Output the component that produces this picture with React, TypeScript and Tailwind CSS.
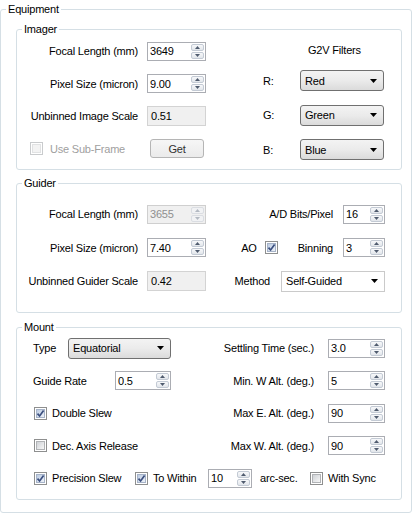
import type { ReactNode } from 'react'

function Arrow({ up, dim }: { up?: boolean; dim?: boolean }) {
  return (
    <svg width="5" height="3" viewBox="0 0 5 3">
      <path d={up ? 'M0 3L2.5 0L5 3Z' : 'M0 0H5L2.5 3Z'} fill={dim ? '#b3b9c2' : '#4f5b6e'} />
    </svg>
  )
}

function Spin({ value, className, disabled }: { value: string; className: string; disabled?: boolean }) {
  return (
    <div
      className={`flex h-[19px] items-stretch border ${
        disabled ? 'border-[#cfcfcf] bg-[#f0f0f0] text-[#8f8f8f]' : 'border-[#abadb3] bg-white'
      } ${className}`}
    >
      <span className="flex flex-1 items-center pl-[2px]">{value}</span>
      <div className="flex w-[15px] flex-col gap-px p-px">
        {[true, false].map((up) => (
          <div
            key={String(up)}
            className={`flex flex-1 items-center justify-center rounded-[2px] border ${
              disabled
                ? 'border-[#dadde2] bg-[#f1f2f4]'
                : 'border-[#c3cad4] bg-linear-to-b from-[#f7f8fa] to-[#e2e6eb]'
            }`}
          >
            <Arrow up={up} dim={disabled} />
          </div>
        ))}
      </div>
    </div>
  )
}

function ReadOnly({ value, className }: { value: string; className: string }) {
  return (
    <div className={`flex h-[20px] items-center border border-[#d3d3d3] bg-[#f0f0f0] pl-[3px] ${className}`}>
      {value}
    </div>
  )
}

function Combo({ value, className, flat }: { value: string; className: string; flat?: boolean }) {
  return (
    <div
      className={`flex h-[21px] items-center justify-between pl-[4px] pr-[6px] ${
        flat
          ? 'border border-[#cacaca] bg-white'
          : 'rounded-[3px] border border-[#707070] bg-linear-to-b from-[#f3f3f3] via-[#ebebeb] to-[#dbdbdb]'
      } ${className}`}
    >
      <span>{value}</span>
      <svg width="7" height="4" viewBox="0 0 7 4">
        <path d="M0 0H7L3.5 4Z" fill="#000" />
      </svg>
    </div>
  )
}

function Check({ checked, disabled }: { checked?: boolean; disabled?: boolean }) {
  return (
    <span
      className={`relative flex h-[13px] w-[13px] shrink-0 border bg-white p-px ${
        disabled ? 'border-[#c9cbcd]' : 'border-[#8e8f8f]'
      }`}
    >
      <span
        className={`h-full w-full border ${
          disabled
            ? 'border-[#e1e2e3] bg-[#f3f3f3]'
            : checked
              ? 'border-[#a6b3c8] bg-linear-to-br from-[#bccbe2] to-[#eef2f8]'
              : 'border-[#b1b3b6] bg-linear-to-br from-[#cfd2d6] to-[#f7f7f7]'
        }`}
      />
      {checked && (
        <svg className="absolute left-[1px] top-[1px]" width="9" height="9" viewBox="0 0 9 9">
          <path d="M1.5 4.6L3.6 7L7.6 1.6" fill="none" stroke="#3b4f7f" strokeWidth="1.7" />
        </svg>
      )}
    </span>
  )
}

function Group({ title, className, children }: { title: string; className: string; children: ReactNode }) {
  return (
    <fieldset className={`rounded-[3px] border border-[#d5dfe5] ${className}`}>
      <legend className="ml-[5px] px-[2px] leading-[14px]">{title}</legend>
      {children}
    </fieldset>
  )
}

function Label({ children, className }: { children: ReactNode; className: string }) {
  return <span className={`shrink-0 text-right ${className}`}>{children}</span>
}

export default function App() {
  return (
    <div className="h-[516px] w-[414px] bg-white font-['Liberation_Sans',Arial,sans-serif] text-[11px] leading-[14px] tracking-[-0.2px] text-black">
      <fieldset className="mt-[2px] w-[412px] rounded-[3px] border border-[#d5dfe5]">
        <legend className="ml-[5px] px-[2px] leading-[14px]">Equipment</legend>

        {/* Imager */}
        <Group title="Imager" className="ml-[15px] mr-[9px] mt-[6px] pb-[9px]">
          <div className="flex">
            <div className="flex w-[189px] flex-col gap-[12.5px] pt-[5px]">
              <div className="flex h-[20px] items-center">
                <Label className="w-[121px]">Focal Length (mm)</Label>
                <Spin value="3649" className="ml-[9px] w-[59px]" />
              </div>
              <div className="flex h-[20px] items-center">
                <Label className="w-[121px]">Pixel Size (micron)</Label>
                <Spin value="9.00" className="ml-[9px] w-[59px]" />
              </div>
              <div className="flex h-[20px] items-center">
                <Label className="w-[121px]">Unbinned Image Scale</Label>
                <ReadOnly value="0.51" className="ml-[9px] w-[59px]" />
              </div>
              <div className="flex h-[20px] items-center">
                <div className="flex w-[133px] items-center pl-[13px] text-[#a0a0a0]">
                  <Check disabled />
                  <span className="ml-[7px]">Use Sub-Frame</span>
                </div>
                <div className="flex h-[19px] w-[54px] items-center justify-center rounded-[3px] border border-[#b5b5b5] bg-linear-to-b from-[#f6f6f6] to-[#ebebeb] text-[#303030]">
                  Get
                </div>
              </div>
            </div>
            <div className="flex flex-col pl-[57px] pt-[7px]">
              <span className="pl-[45px]">G2V Filters</span>
              <div className="mt-[13px] flex flex-col gap-[13.5px]">
                {[
                  ['R:', 'Red'],
                  ['G:', 'Green'],
                  ['B:', 'Blue'],
                ].map(([k, v]) => (
                  <div key={k} className="flex items-center">
                    <span className="w-[37px]">{k}</span>
                    <Combo value={v} className="w-[84px]" />
                  </div>
                ))}
              </div>
            </div>
          </div>
        </Group>

        {/* Guider */}
        <Group title="Guider" className="ml-[15px] mr-[9px] mt-[6px] pb-[21px]">
          <div className="flex flex-col gap-[13.5px] pt-[14px]">
            <div className="flex h-[20px] items-center">
              <Label className="w-[121px]">Focal Length (mm)</Label>
              <Spin value="3655" className="ml-[9px] w-[59px]" disabled />
              <div className="flex flex-1 items-center justify-end pr-[16px]">
                <span>A/D Bits/Pixel</span>
                <Spin value="16" className="ml-[10px] w-[42px]" />
              </div>
            </div>
            <div className="flex h-[20px] items-center">
              <Label className="w-[121px]">Pixel Size (micron)</Label>
              <Spin value="7.40" className="ml-[9px] w-[59px]" />
              <div className="flex flex-1 items-center justify-end pr-[16px]">
                <span>AO</span>
                <span className="ml-[8px]">
                  <Check checked />
                </span>
                <span className="ml-[20px]">Binning</span>
                <Spin value="3" className="ml-[10px] w-[42px]" />
              </div>
            </div>
            <div className="flex h-[20px] items-center">
              <Label className="w-[121px]">Unbinned Guider Scale</Label>
              <ReadOnly value="0.42" className="ml-[9px] w-[59px]" />
              <div className="flex flex-1 items-center justify-end pr-[16px]">
                <span>Method</span>
                <Combo value="Self-Guided" className="ml-[11px] w-[104px]" flat />
              </div>
            </div>
          </div>
        </Group>

        {/* Mount */}
        <Group title="Mount" className="mb-[12px] ml-[15px] mr-[9px] mt-[7px] pb-[11px]">
          <div className="flex flex-col gap-[12.5px] pt-[4px]">
            <div className="flex h-[20px] items-center pl-[16px]">
              <span className="w-[35px]">Type</span>
              <Combo value="Equatorial" className="h-[20px] w-[103px]" />
              <div className="flex flex-1 items-center justify-end pr-[16px]">
                <span>Settling Time (sec.)</span>
                <Spin value="3.0" className="ml-[14px] w-[57px]" />
              </div>
            </div>
            <div className="flex h-[20px] items-center pl-[16px]">
              <span className="w-[82px]">Guide Rate</span>
              <Spin value="0.5" className="w-[56px]" />
              <div className="flex flex-1 items-center justify-end pr-[16px]">
                <span>Min. W Alt. (deg.)</span>
                <Spin value="5" className="ml-[14px] w-[57px]" />
              </div>
            </div>
            <div className="flex h-[20px] items-center pl-[17px]">
              <Check checked />
              <span className="ml-[5px]">Double Slew</span>
              <div className="flex flex-1 items-center justify-end pr-[16px]">
                <span>Max E. Alt. (deg.)</span>
                <Spin value="90" className="ml-[14px] w-[57px]" />
              </div>
            </div>
            <div className="flex h-[20px] items-center pl-[17px]">
              <Check />
              <span className="ml-[5px]">Dec. Axis Release</span>
              <div className="flex flex-1 items-center justify-end pr-[16px]">
                <span>Max W. Alt. (deg.)</span>
                <Spin value="90" className="ml-[14px] w-[57px]" />
              </div>
            </div>
            <div className="flex h-[20px] items-center pl-[17px]">
              <div className="flex w-[101px] items-center">
                <Check checked />
                <span className="ml-[5px]">Precision Slew</span>
              </div>
              <div className="flex w-[73px] items-center">
                <Check checked />
                <span className="ml-[5px]">To Within</span>
              </div>
              <Spin value="10" className="w-[44px]" />
              <span className="ml-[8px] w-[50px]">arc-sec.</span>
              <Check />
              <span className="ml-[5px]">With Sync</span>
            </div>
          </div>
        </Group>
      </fieldset>
    </div>
  )
}
